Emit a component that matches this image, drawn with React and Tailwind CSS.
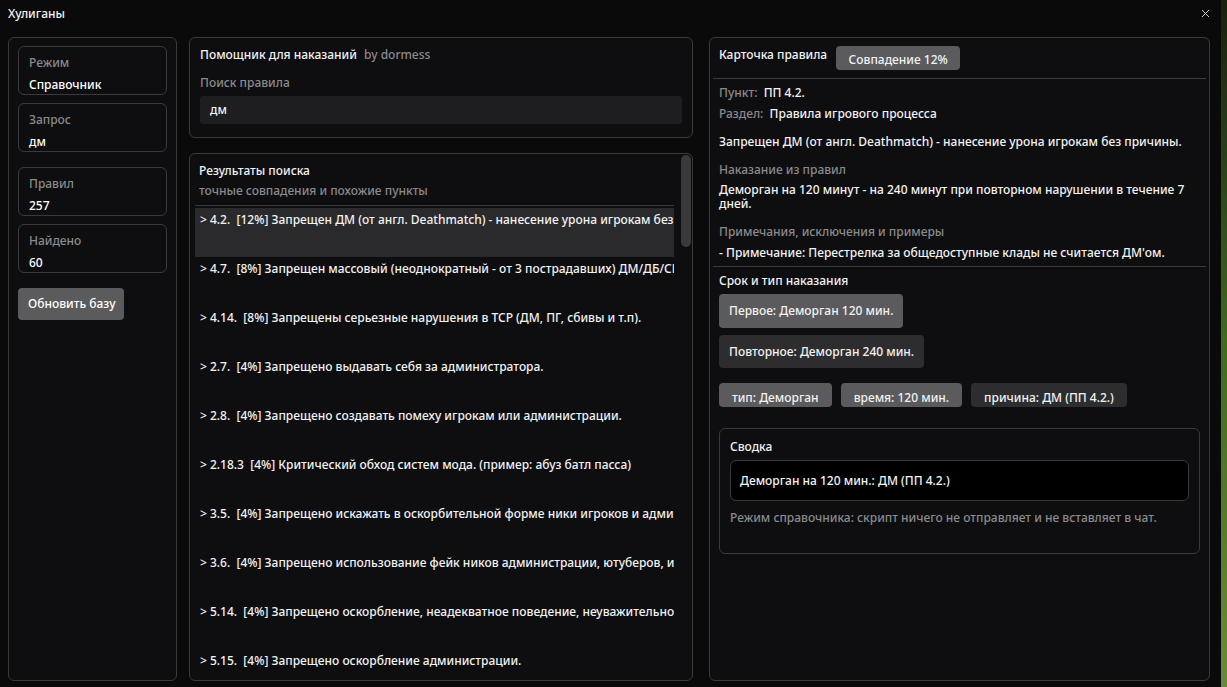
import React from 'react';
import { X } from 'lucide-react';

const results = [
  '> 4.2.  [12%] Запрещен ДМ (от англ. Deathmatch) - нанесение урона игрокам без причины.',
  '> 4.7.  [8%] Запрещен массовый (неоднократный - от 3 пострадавших) ДМ/ДБ/СК',
  '> 4.14.  [8%] Запрещены серьезные нарушения в ТСР (ДМ, ПГ, сбивы и т.п).',
  '> 2.7.  [4%] Запрещено выдавать себя за администратора.',
  '> 2.8.  [4%] Запрещено создавать помеху игрокам или администрации.',
  '> 2.18.3  [4%] Критический обход систем мода. (пример: абуз батл пасса)',
  '> 3.5.  [4%] Запрещено искажать в оскорбительной форме ники игроков и администрации',
  '> 3.6.  [4%] Запрещено использование фейк ников администрации, ютуберов, игроков',
  '> 5.14.  [4%] Запрещено оскорбление, неадекватное поведение, неуважительное отношение',
  '> 5.15.  [4%] Запрещено оскорбление администрации.',
];

const StatCard = ({ label, value }) => (
  <div className="h-[49px] shrink-0 rounded-md border border-[#3a3a3c] px-[10px] pt-[8px]">
    <div className="text-[#8a8a8c] leading-[16px]">{label}</div>
    <div className="mt-[6px] text-white leading-[16px]">{value}</div>
  </div>
);

const Chip = ({ children, light }) => (
  <div className={`rounded-[4px] px-[13px] pt-[6px] h-[24px] leading-[18px] ${light ? 'bg-[#5b5b5d]' : 'bg-[#2d2d2f]'}`}>
    {children}
  </div>
);

export default function App() {
  return (
    <div
      className="relative w-[1227px] h-[687px] overflow-hidden bg-[#0a0a0b] text-[12px] font-medium text-[#f2f2f2] flex flex-col"
      style={{ fontFamily: '"Noto Sans", "DejaVu Sans", sans-serif' }}
    >
      <div className="h-[27px] shrink-0 flex items-center justify-between pl-[8px] pr-[15px]">
        <span className="leading-none">Хулиганы</span>
        <X size={13} strokeWidth={1.5} className="text-white" />
      </div>

      <div className="flex-1 min-h-0 flex gap-[12px] pl-[8px] pr-[17px] pt-[10px] pb-[6px]">
        {/* left */}
        <div className="w-[169px] shrink-0 rounded-md border border-[#3a3a3c] bg-[#0e0e10] px-[9px] pt-[8px] flex flex-col">
          <StatCard label="Режим" value="Справочник" />
          <div className="h-[8px] shrink-0" />
          <StatCard label="Запрос" value="дм" />
          <div className="h-[15px] shrink-0" />
          <StatCard label="Правил" value="257" />
          <div className="h-[8px] shrink-0" />
          <StatCard label="Найдено" value="60" />
          <button className="mt-[15px] w-[106px] h-[32px] rounded-[4px] bg-[#5b5b5d] text-left pl-[10px] text-white">
            Обновить базу
          </button>
        </div>

        {/* middle */}
        <div className="w-[504px] shrink-0 min-h-0 flex flex-col gap-[15px]">
          <div className="h-[101px] shrink-0 rounded-md border border-[#3a3a3c] bg-[#0e0e10] px-[10px] pt-[8px]">
            <div className="leading-[18px]">
              Помощник для наказаний <span className="ml-[4px] text-[#8a8a8c]">by dormess</span>
            </div>
            <div className="mt-[10px] text-[#8a8a8c] leading-[18px]">Поиск правила</div>
            <div className="mt-[4px] h-[28px] rounded-[3px] bg-[#1e1e20] pl-[10px] flex items-center">дм</div>
          </div>

          <div className="flex-1 min-h-0 relative rounded-md border border-[#3a3a3c] bg-[#0e0e10] pl-[5px] pr-[18px] overflow-hidden">
            <div className="pl-[4px] pt-[8px] leading-[18px]">Результаты поиска</div>
            <div className="pl-[4px] pt-[2px] leading-[18px] text-[#8a8a8c]">точные совпадения и похожие пункты</div>
            <div className="mt-[5px] h-px bg-[#3a3a3c]" />
            <div className="mt-[2px] flex flex-col">
              {results.map((r, i) => (
                <div
                  key={i}
                  className={`h-[49px] shrink-0 pl-[5px] pt-[3px] whitespace-pre overflow-hidden leading-[18px] ${i === 0 ? 'bg-[#2a2a2c]' : ''}`}
                >
                  {r}
                </div>
              ))}
            </div>
            <div className="absolute right-[1px] top-[1px] w-[10px] h-[92px] rounded-full bg-[#3a3a3c]" />
          </div>
        </div>

        {/* right */}
        <div className="flex-1 ml-[4px] rounded-md border border-[#3a3a3c] bg-[#0e0e10] px-[3px] pt-[8px]">
          <div className="flex items-start px-[6px] h-[32px]">
            <span className="leading-[18px]">Карточка правила</span>
            <span className="ml-[9px] h-[24px] w-[124px] rounded-[4px] bg-[#5b5b5d] flex items-end justify-center pb-[1px] leading-[18px]">
              Совпадение 12%
            </span>
          </div>
          <div className="h-px bg-[#3a3a3c]" />
          <div className="px-[6px]">
            <div className="mt-[5px] leading-[18px] whitespace-pre"><span className="text-[#8a8a8c]">Пункт:</span>  ПП 4.2.</div>
            <div className="mt-[3px] leading-[18px] whitespace-pre"><span className="text-[#8a8a8c]">Раздел:</span>  Правила игрового процесса</div>
            <div className="mt-[10px] leading-[18px]">Запрещен ДМ (от англ. Deathmatch) - нанесение урона игрокам без причины.</div>
            <div className="mt-[10px] leading-[18px] text-[#8a8a8c]">Наказание из правил</div>
            <div className="mt-[4px] leading-[14px] pr-[8px]">Деморган на 120 минут - на 240 минут при повторном нарушении в течение 7 дней.</div>
            <div className="mt-[12px] leading-[18px] text-[#8a8a8c]">Примечания, исключения и примеры</div>
            <div className="mt-[3px] leading-[18px]">- Примечание: Перестрелка за общедоступные клады не считается ДМ'ом.</div>
          </div>
          <div className="mt-[4px] h-px bg-[#3a3a3c]" />
          <div className="px-[6px]">
            <div className="mt-[5px] leading-[18px]">Срок и тип наказания</div>
            <div className="mt-[4px] flex flex-col items-start gap-[7px]">
              <div className="h-[34px] rounded-[4px] bg-[#5b5b5d] px-[10px] flex items-center">Первое: Деморган 120 мин.</div>
              <div className="h-[33px] rounded-[4px] bg-[#2d2d2f] px-[10px] flex items-center">Повторное: Деморган 240 мин.</div>
            </div>
            <div className="mt-[15px] flex gap-[9px]">
              <Chip light>тип: Деморган</Chip>
              <Chip light>время: 120 мин.</Chip>
              <Chip>причина: ДМ (ПП 4.2.)</Chip>
            </div>
            <div className="mt-[21px] h-[126px] rounded-md border border-[#3a3a3c] px-[10px] pt-[9px]">
              <div className="leading-[18px]">Сводка</div>
              <div className="mt-[4px] h-[41px] rounded-md border border-[#3a3a3c] bg-black px-[9px] flex items-center">
                Деморган на 120 мин.: ДМ (ПП 4.2.)
              </div>
              <div className="mt-[8px] leading-[18px] text-[#8a8a8c]">Режим справочника: скрипт ничего не отправляет и не вставляет в чат.</div>
            </div>
          </div>
        </div>
      </div>
      <div className="absolute right-0 top-0 w-[6px] h-full bg-gradient-to-b from-[#1a1f10] via-[#3f6b1f] to-[#6a8a3a]" />
    </div>
  );
}
